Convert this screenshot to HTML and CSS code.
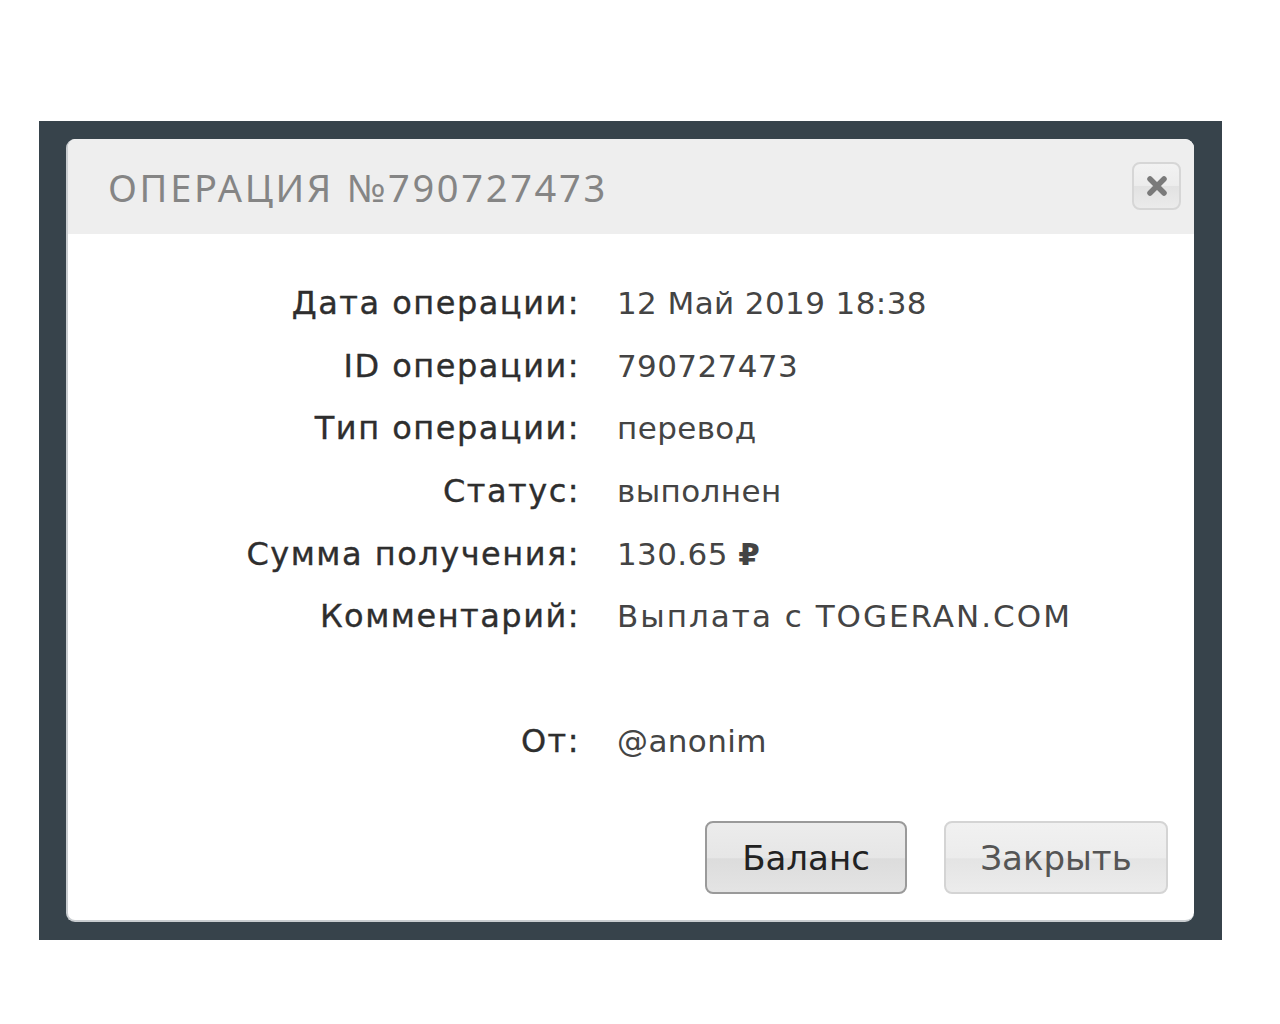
FILE: index.html
```html
<!DOCTYPE html>
<html lang="ru">
<head>
<meta charset="utf-8">
<title>Операция</title>
<link rel="stylesheet" href="styles.css">
</head>
<body>
<div class="overlay">
  <div class="modal">
    <div class="modal-header">
      <h1 class="modal-title">ОПЕРАЦИЯ №790727473</h1>
      <button class="close-btn" aria-label="Закрыть">
        <svg width="24" height="24" viewBox="0 0 24 24"><path d="M5 5 L19 19 M19 5 L5 19" stroke="#7a7a7a" stroke-width="5.5" stroke-linecap="round"/></svg>
      </button>
    </div>
    <div class="modal-body">
      <dl class="details">
        <dt>Дата операции:</dt><dd>12 Май 2019 18:38</dd>
        <dt>ID операции:</dt><dd>790727473</dd>
        <dt>Тип операции:</dt><dd>перевод</dd>
        <dt>Статус:</dt><dd>выполнен</dd>
        <dt>Сумма получения:</dt><dd>130.65 <span class="rub">₽</span></dd>
        <dt>Комментарий:</dt><dd class="wide">Выплата с TOGERAN.COM</dd>
        <dt class="spacer"></dt><dd class="spacer"></dd>
        <dt>От:</dt><dd>@anonim</dd>
      </dl>
      <div class="actions">
        <button class="btn btn-primary">Баланс</button>
        <button class="btn btn-secondary">Закрыть</button>
      </div>
    </div>
  </div>
</div>
</body>
</html>
```
FILE: styles.css
```css
html, body {
  margin: 0;
  padding: 0;
  background: #ffffff;
}
body {
  font-family: "DejaVu Sans", "Liberation Sans", sans-serif;
  width: 1280px;
  height: 1024px;
  overflow: hidden;
}
.overlay {
  margin: 121px 0 0 39px;
  width: 1183px;
  height: 819px;
  box-sizing: border-box;
  padding: 18px 0 0 27px;
  background: #37434b;
}
.modal {
  width: 1128px;
  height: 783px;
  box-sizing: border-box;
  background: #ffffff;
  border-radius: 9px;
  border-left: 2px solid #c9cdd0;
  border-bottom: 2px solid #c9cdd0;
  overflow: hidden;
  display: flex;
  flex-direction: column;
}
.modal-header {
  height: 95px;
  flex: none;
  background: #eeeeee;
  display: flex;
  align-items: center;
  justify-content: space-between;
  padding: 0 13px 0 40px;
}
.modal-title {
  margin: 0;
  font-family: "Noto Sans", "Liberation Sans", sans-serif;
  font-weight: 400;
  font-size: 38px;
  letter-spacing: 2.7px;
  color: #858585;
}
.close-btn {
  width: 49px;
  height: 48px;
  margin-top: -2px;
  border: 2px solid #d6d6d6;
  border-radius: 8px;
  background: linear-gradient(#f2f2f2 0%, #ececec 50%, #e2e2e2 51%, #ebebeb 100%);
  display: flex;
  align-items: center;
  justify-content: center;
  padding: 0;
}
.modal-body {
  flex: 1;
  display: flex;
  flex-direction: column;
  padding: 38px 26px 26px 0;
}
.details {
  margin: 0;
  display: grid;
  grid-template-columns: 512px 1fr;
  column-gap: 37px;
  grid-auto-rows: 62.6px;
  align-items: center;
}
.details dt {
  text-align: right;
  font-size: 32px;
  letter-spacing: 1.5px;
  color: #2e2e2e;
  -webkit-text-stroke: 0.35px #2e2e2e;
}
.details dd {
  margin: 0;
  font-size: 31px;
  letter-spacing: 0.4px;
  color: #444444;
}
.details dd.wide {
  letter-spacing: 2px;
}
.rub {
  font-weight: 700;
}
.actions {
  margin-top: auto;
  display: flex;
  justify-content: flex-end;
  gap: 37px;
}
.btn {
  height: 73px;
  border-radius: 8px;
  font-family: "DejaVu Sans", sans-serif;
  font-size: 34px;
  padding: 0;
  cursor: pointer;
}
.btn-primary {
  width: 202px;
  color: #222222;
  border: 2px solid #9a9a9a;
  background: linear-gradient(#ececec 0%, #e6e6e6 50%, #dcdcdc 52%, #e4e4e4 100%);
}
.btn-secondary {
  width: 224px;
  color: #555555;
  border: 2px solid #d4d4d4;
  background: linear-gradient(#f1f1f1 0%, #ececec 50%, #e4e4e4 52%, #ececec 100%);
}
```
